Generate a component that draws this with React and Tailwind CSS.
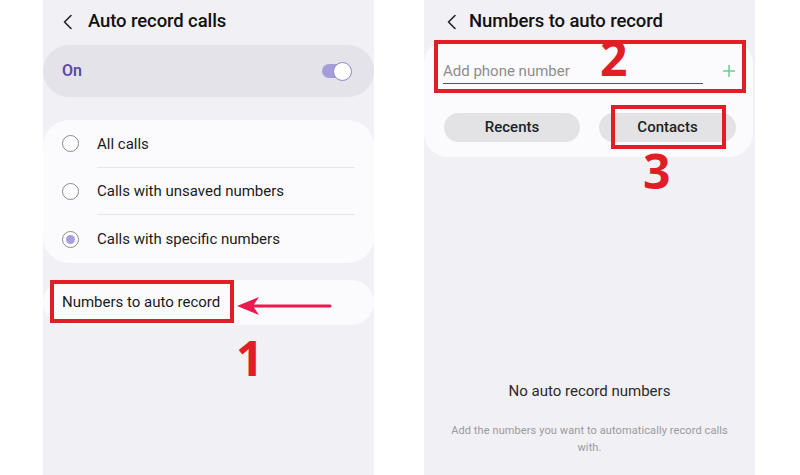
import React from "react";

const font = { fontFamily: "Roboto, 'Noto Sans', sans-serif" };

function Chevron() {
  return (
    <svg width="12" height="16" viewBox="0 0 12 16" fill="none">
      <path d="M9 1.5 L2.5 8 L9 14.5" stroke="#222" strokeWidth="1.6" strokeLinecap="round" strokeLinejoin="round" />
    </svg>
  );
}

function Radio({ checked }) {
  return (
    <div className="w-[17px] h-[17px] rounded-full border border-[#8a8a8a] flex items-center justify-center bg-white">
      {checked && <div className="w-[9px] h-[9px] rounded-full bg-[#a89ee0]" />}
    </div>
  );
}

export default function App() {
  return (
    <div className="w-[800px] h-[475px] bg-white flex gap-[50px] pl-[43px] overflow-hidden" style={font}>
      {/* Left panel */}
      <div className="relative w-[331px] h-[475px] bg-[#f1f0f5] flex flex-col">
        <div className="h-[42px] flex items-center pl-[19px] pt-[1px]">
          <Chevron />
          <span className="ml-[14px] text-[18.5px] text-[#111] font-medium tracking-[-0.1px]">Auto record calls</span>
        </div>
        <div className="mt-[3px] h-[52px] rounded-[26px] bg-[#e4e3ea] flex items-center justify-between pl-[19px] pr-[22px]">
          <span className="text-[16px] font-semibold text-[#5b4aa8]">On</span>
          <div className="relative w-[30px] h-[17px] flex items-center">
            <div className="w-[28px] h-[14px] rounded-full bg-[#a59dda]" />
            <div className="absolute right-0 top-[-1px] w-[19px] h-[19px] rounded-full bg-white border border-[#8f88c8]" />
          </div>
        </div>
        <div className="mt-[23px] h-[143px] rounded-[26px] bg-[#fbfbfd] flex flex-col justify-center">
          {[
            ["All calls", false],
            ["Calls with unsaved numbers", false],
            ["Calls with specific numbers", true],
          ].map(([label, checked], i) => (
            <div key={i} className="h-[48px] flex items-center pl-[19px]">
              <Radio checked={checked} />
              <div className={"ml-[18px] flex-1 h-full flex items-center mr-[19px] " + (i < 2 ? "border-b border-[#e6e6ea]" : "")}>
                <span className={"text-[15px] text-[#1a1a1a] " + (i < 2 ? "pt-[1px]" : "")}>{label}</span>
              </div>
            </div>
          ))}
        </div>
        <div className="mt-[17px] h-[45px] rounded-[23px] bg-[#fbfbfd] flex items-center pl-[19px]">
          <span className="text-[15px] text-[#1a1a1a]">Numbers to auto record</span>
        </div>

        {/* annotations */}
        <div className="absolute left-[7px] top-[280px] w-[184px] h-[43px] border-[4px] border-[#e11d25]" />
        <svg className="absolute left-[190px] top-[293px]" width="100" height="26" viewBox="0 0 100 26">
          <line x1="14" y1="13" x2="97" y2="13" stroke="#ea1a4f" strokeWidth="3" strokeLinecap="round" />
          <path d="M4 13 L26 4 L20 13 L26 22 Z" fill="#ea1a4f" />
        </svg>
        <div className="absolute left-[193px] top-[334px] text-[48px] leading-none font-bold text-[#e11d25]" style={{ fontFamily: "'Open Sans', sans-serif" }}>1</div>
      </div>

      {/* Right panel */}
      <div className="relative w-[331px] h-[475px] bg-[#f1f0f5] flex flex-col">
        <div className="h-[42px] flex items-center pl-[22px] pt-[1px]">
          <Chevron />
          <span className="ml-[11px] text-[18.5px] text-[#111] font-medium tracking-[-0.1px]">Numbers to auto record</span>
        </div>
        <div className="mt-[-2px] mr-[2px] h-[117px] rounded-[24px] bg-[#fbfbfd] flex flex-col pl-[19px] pr-[17px]">
          <div className="mt-[19px] flex items-end">
            <div className="w-[260px] h-[25px] border-b border-[#555] flex items-center">
              <span className="text-[15px] text-[#8d8d8d]">Add phone number</span>
            </div>
            <svg className="ml-[19px] mb-[6px]" width="14" height="14" viewBox="0 0 14 14">
              <path d="M7 1 V13 M1 7 H13" stroke="#6fcf97" strokeWidth="1.6" />
            </svg>
          </div>
          <div className="mt-[29px] flex gap-[19px] pl-[1px]">
            <div className="w-[136px] h-[29px] rounded-full bg-[#e3e3e5] flex items-center justify-center text-[15px] font-medium text-[#222]">Recents</div>
            <div className="w-[137px] h-[29px] rounded-full bg-[#e3e3e5] flex items-center justify-center text-[15px] font-medium text-[#222]">Contacts</div>
          </div>
        </div>
        <div className="flex-1 flex flex-col items-center pt-[223px]">
          <span className="text-[15px] text-[#2a2a2a]">No auto record numbers</span>
          <p className="mt-[19px] w-[292px] text-center text-[11px] tracking-[0.1px] leading-[17px] text-[#9a9a9a]">
            Add the numbers you want to automatically record calls with.
          </p>
        </div>

        {/* annotations */}
        <div className="absolute left-[10px] top-[40px] w-[312px] h-[53px] border-[4px] border-[#e11d25]" />
        <div className="absolute left-[176px] top-[34px] text-[48px] leading-none font-bold text-[#e11d25]" style={{ fontFamily: "'Open Sans', sans-serif" }}>2</div>
        <div className="absolute left-[187px] top-[105px] w-[115px] h-[44px] border-[4px] border-[#e11d25]" />
        <div className="absolute left-[219px] top-[147px] text-[48px] leading-none font-bold text-[#e11d25]" style={{ fontFamily: "'Open Sans', sans-serif" }}>3</div>
      </div>
    </div>
  );
}
